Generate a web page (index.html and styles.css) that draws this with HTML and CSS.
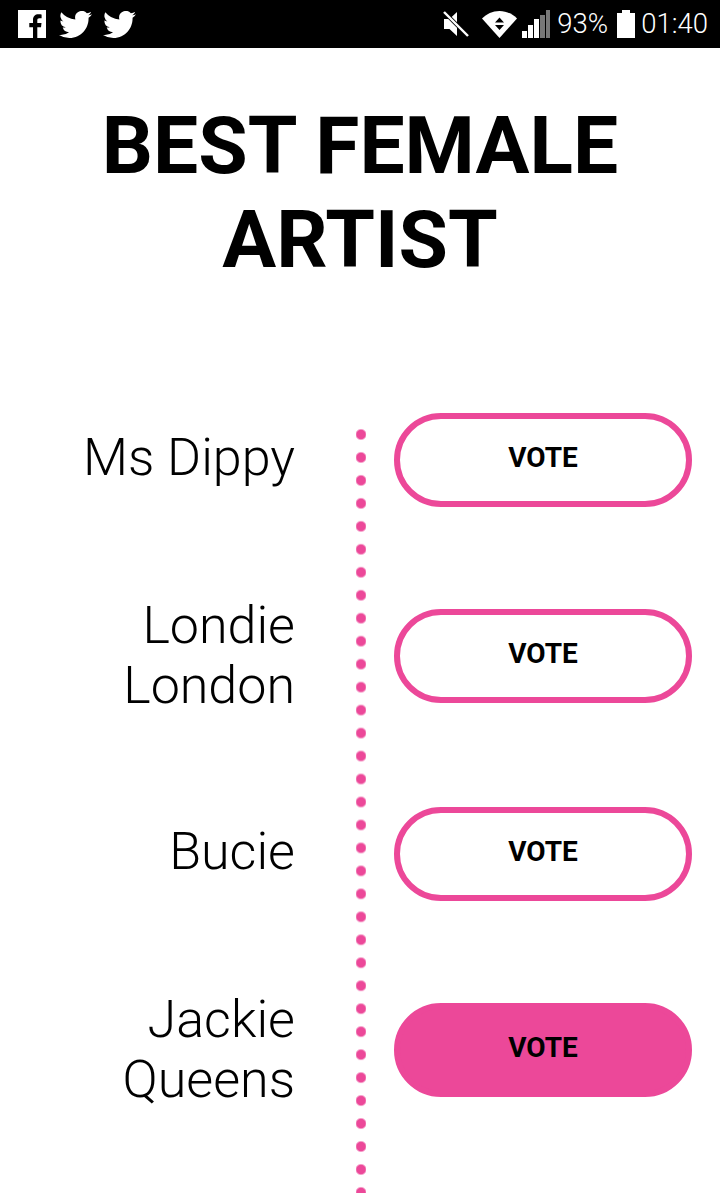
FILE: index.html
```html
<!DOCTYPE html>
<html lang="en">
<head>
    <meta charset="UTF-8">
    <meta name="viewport" content="width=device-width, initial-scale=1.0">
    <title>Best Female Artist</title>
    <link rel="stylesheet" href="styles.css">
</head>
<body>

<div class="status-bar">
    <div class="status-left">
        <svg class="icon-fb" width="28" height="28" viewBox="0 0 28 28">
            <path fill="#fff" fill-rule="evenodd" d="M0 0H28V28H0Z M19.3 28V17.2H23L23.5 12.9H19.3V10.3C19.3 9 19.7 8.2 21.4 8.2H23.6V4.4C23.2 4.3 21.9 4.2 20.4 4.2C17.2 4.2 15 6.2 15 9.8V12.9H11.3V17.2H15V28Z"/>
        </svg>
        <svg class="icon-tw" width="33" height="27" viewBox="0 0 24 19.5">
            <path fill="#fff" d="M24 2.3a9.8 9.8 0 0 1-2.8.8 4.9 4.9 0 0 0 2.2-2.7 9.8 9.8 0 0 1-3.1 1.2 4.9 4.9 0 0 0-8.4 4.5A14 14 0 0 1 1.7.9a4.9 4.9 0 0 0 1.5 6.6 4.9 4.9 0 0 1-2.2-.6v.1a4.9 4.9 0 0 0 3.9 4.8 4.9 4.9 0 0 1-2.2.1 4.9 4.9 0 0 0 4.6 3.4A9.9 9.9 0 0 1 0 17.3a14 14 0 0 0 7.5 2.2c9.1 0 14-7.5 14-14v-.6A10 10 0 0 0 24 2.3z"/>
        </svg>
        <svg class="icon-tw" width="33" height="27" viewBox="0 0 24 19.5">
            <path fill="#fff" d="M24 2.3a9.8 9.8 0 0 1-2.8.8 4.9 4.9 0 0 0 2.2-2.7 9.8 9.8 0 0 1-3.1 1.2 4.9 4.9 0 0 0-8.4 4.5A14 14 0 0 1 1.7.9a4.9 4.9 0 0 0 1.5 6.6 4.9 4.9 0 0 1-2.2-.6v.1a4.9 4.9 0 0 0 3.9 4.8 4.9 4.9 0 0 1-2.2.1 4.9 4.9 0 0 0 4.6 3.4A9.9 9.9 0 0 1 0 17.3a14 14 0 0 0 7.5 2.2c9.1 0 14-7.5 14-14v-.6A10 10 0 0 0 24 2.3z"/>
        </svg>
    </div>
    <div class="status-right">
        <svg class="icon-mute" width="26" height="26" viewBox="0 0 26 26">
            <path fill="#fff" d="M1 8H6.5L14 1V25L6.5 18H1Z"/>
            <path stroke="#000" stroke-width="4" d="M0 0L25 25"/>
            <path stroke="#fff" stroke-width="2.4" d="M1 1L25 25"/>
        </svg>
        <svg class="icon-wifi" width="35" height="27" viewBox="0 0 35 27">
            <path fill="#fff" d="M0 7.5C4.500 3 10.500 0 17.500 0S30.500 3 35 7.500L17.500 27Z"/>
            <path fill="#000" d="M17.500 6.500L22 11.500H13Z M13 14H22L17.500 19Z"/>
        </svg>
        <svg class="icon-signal" width="29" height="28" viewBox="0 0 29 28">
            <rect x="0" y="21" width="5" height="7" fill="#fff"/>
            <rect x="6" y="15" width="5" height="13" fill="#fff"/>
            <rect x="12" y="9" width="5" height="19" fill="#fff"/>
            <rect x="18" y="5" width="5" height="23" fill="#777"/>
            <rect x="24" y="0" width="4" height="28" fill="#777"/>
        </svg>
        <span class="battery-text">93%</span>
        <svg class="icon-battery" width="18" height="28" viewBox="0 0 18 28">
            <path fill="#fff" d="M5 0H13V3H18V28H0V3H5Z"/>
        </svg>
        <span class="clock">01:40</span>
    </div>
</div>

<h1 class="title">BEST FEMALE ARTIST</h1>

<div class="ballot">
    <div class="nominee">
        <div class="name short">Ms Dippy</div>
        <button class="vote" type="button">VOTE</button>
    </div>
    <div class="nominee">
        <div class="name">Londie London</div>
        <button class="vote" type="button">VOTE</button>
    </div>
    <div class="nominee third">
        <div class="name short">Bucie</div>
        <button class="vote" type="button">VOTE</button>
    </div>
    <div class="nominee">
        <div class="name">Jackie Queens</div>
        <button class="vote active" type="button">VOTE</button>
    </div>
</div>

</body>
</html>
```

FILE: styles.css
```css
html, body {
    height: 100%;
}
body {
    margin: 0;
    height: 1193px;
    overflow: hidden;
    background-color: #FFFFFF;
    color: #000000;
    font-family: Roboto, "Liberation Sans", sans-serif;
}
.status-bar {
    height: 48px;
    background-color: #000000;
    color: #FFFFFF;
    display: flex;
    justify-content: space-between;
    align-items: center;
    padding: 0 12px 0 18px;
}
.status-left, .status-right {
    display: flex;
    align-items: center;
}
.icon-tw {
    margin-left: 13px;
}
.icon-tw + .icon-tw {
    margin-left: 11px;
}
.icon-mute {
    margin-right: 13px;
}
.icon-wifi {
    margin-right: 5px;
}
.battery-text, .clock {
    font-size: 27.5px;
    font-weight: 300;
    line-height: 48px;
}
.battery-text {
    margin: 0 9px 0 6px;
}
.clock {
    margin-left: 6px;
}
.title {
    margin: 51px 0 0;
    padding: 0 60px;
    text-align: center;
    font-size: 80.3px;
    line-height: 94px;
    font-weight: 700;
}
.ballot {
    position: relative;
    margin-top: 126px;
    display: flex;
    flex-direction: column;
    gap: 102px;
    padding-right: 28px;
}
/* linea de puntos */
.ballot::before {
    content: "";
    position: absolute;
    left: 356px;
    top: 9.5px;
    width: 10px;
    height: 800px;
    background-image: radial-gradient(circle at center, #EC4899 0, #EC4899 4.2px, rgba(236,72,153,0) 6px);
    background-size: 10px 22.97px;
}
.nominee {
    display: flex;
    align-items: center;
    justify-content: flex-end;
    height: 94px;
}
.nominee.third {
    margin-top: 2px;
}
.name {
    width: 230px;
    margin-right: 99px;
    text-align: right;
    font-size: 52px;
    line-height: 60.5px;
    font-weight: 300;
}
.name.short {
    padding-bottom: 4px;
}
.vote {
    width: 298px;
    height: 94px;
    box-sizing: border-box;
    border: 6px solid #EC4899;
    border-radius: 47px;
    background-color: #FFFFFF;
    color: #000000;
    padding: 0 0 6px;
    font-family: Roboto, "Liberation Sans", sans-serif;
    font-size: 28px;
    font-weight: 700;
}
.vote.active {
    background-color: #EC4899;
}
```
